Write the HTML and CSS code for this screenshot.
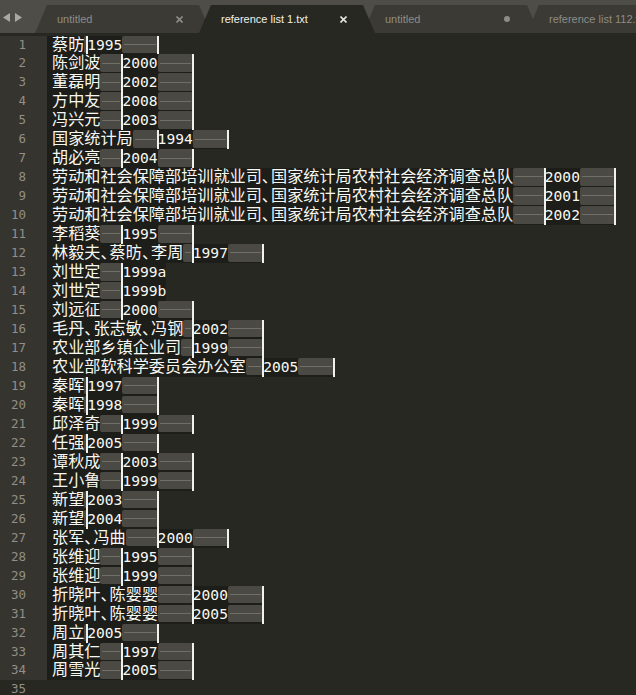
FILE: index.html
```html
<!DOCTYPE html>
<html lang="zh-CN">
<head>
    <meta charset="UTF-8">
    <title>reference list 1.txt</title>
    <link rel="stylesheet" href="styles.css">
</head>
<body>
<div id="tabbar">
    <svg class="arrows" width="35" height="33" viewBox="0 0 35 33">
        <polygon points="10,13 3,17.5 10,22" fill="#a9a8a2"/>
        <polygon points="15,13 22,17.5 15,22" fill="#a9a8a2"/>
    </svg>
    <div class="tabs">
        <div class="tab">
            <span class="name">untitled</span>
            <svg class="close" width="7" height="7" viewBox="0 0 7 7"><path d="M0.5 0.5L6.5 6.5M6.5 0.5L0.5 6.5"/></svg>
        </div>
        <div class="tab active">
            <span class="name">reference list 1.txt</span>
            <svg class="close" width="7" height="7" viewBox="0 0 7 7"><path d="M0.5 0.5L6.5 6.5M6.5 0.5L0.5 6.5"/></svg>
        </div>
        <div class="tab">
            <span class="name">untitled</span>
            <span class="dot"></span>
        </div>
        <div class="tab">
            <span class="name">reference list 112.txt</span>
        </div>
    </div>
</div>
<div id="editor">
    <div class="line"><span class="num">1</span><span class="code"><span class="cell w1"><span class="zh">蔡昉</span><i class="ws"></i></span><span class="cell w2"><span class="en">1995</span><i class="ws"></i></span></span></div>
    <div class="line"><span class="num">2</span><span class="code"><span class="cell w2"><span class="zh">陈剑波</span><i class="ws"></i></span><span class="cell w2"><span class="en">2000</span><i class="ws"></i></span></span></div>
    <div class="line"><span class="num">3</span><span class="code"><span class="cell w2"><span class="zh">董磊明</span><i class="ws"></i></span><span class="cell w2"><span class="en">2002</span><i class="ws"></i></span></span></div>
    <div class="line"><span class="num">4</span><span class="code"><span class="cell w2"><span class="zh">方中友</span><i class="ws"></i></span><span class="cell w2"><span class="en">2008</span><i class="ws"></i></span></span></div>
    <div class="line"><span class="num">5</span><span class="code"><span class="cell w2"><span class="zh">冯兴元</span><i class="ws"></i></span><span class="cell w2"><span class="en">2003</span><i class="ws"></i></span></span></div>
    <div class="line"><span class="num">6</span><span class="code"><span class="cell w3"><span class="zh">国家统计局</span><i class="ws"></i></span><span class="cell w2"><span class="en">1994</span><i class="ws"></i></span></span></div>
    <div class="line"><span class="num">7</span><span class="code"><span class="cell w2"><span class="zh">胡必亮</span><i class="ws"></i></span><span class="cell w2"><span class="en">2004</span><i class="ws"></i></span></span></div>
    <div class="line"><span class="num">8</span><span class="code"><span class="cell w14"><span class="zh">劳动和社会保障部培训就业司<span class="dun">、</span>国家统计局农村社会经济调查总队</span><i class="ws"></i></span><span class="cell w2"><span class="en">2000</span><i class="ws"></i></span></span></div>
    <div class="line"><span class="num">9</span><span class="code"><span class="cell w14"><span class="zh">劳动和社会保障部培训就业司<span class="dun">、</span>国家统计局农村社会经济调查总队</span><i class="ws"></i></span><span class="cell w2"><span class="en">2001</span><i class="ws"></i></span></span></div>
    <div class="line"><span class="num">10</span><span class="code"><span class="cell w14"><span class="zh">劳动和社会保障部培训就业司<span class="dun">、</span>国家统计局农村社会经济调查总队</span><i class="ws"></i></span><span class="cell w2"><span class="en">2002</span><i class="ws"></i></span></span></div>
    <div class="line"><span class="num">11</span><span class="code"><span class="cell w2"><span class="zh">李稻葵</span><i class="ws"></i></span><span class="cell w2"><span class="en">1995</span><i class="ws"></i></span></span></div>
    <div class="line"><span class="num">12</span><span class="code"><span class="cell w4"><span class="zh">林毅夫<span class="dun">、</span>蔡昉<span class="dun">、</span>李周</span><i class="ws"></i></span><span class="cell w2"><span class="en">1997</span><i class="ws"></i></span></span></div>
    <div class="line"><span class="num">13</span><span class="code"><span class="cell w2"><span class="zh">刘世定</span><i class="ws"></i></span><span class="en">1999a</span></span></div>
    <div class="line"><span class="num">14</span><span class="code"><span class="cell w2"><span class="zh">刘世定</span><i class="ws"></i></span><span class="en">1999b</span></span></div>
    <div class="line"><span class="num">15</span><span class="code"><span class="cell w2"><span class="zh">刘远征</span><i class="ws"></i></span><span class="cell w2"><span class="en">2000</span><i class="ws"></i></span></span></div>
    <div class="line"><span class="num">16</span><span class="code"><span class="cell w4"><span class="zh">毛丹<span class="dun">、</span>张志敏<span class="dun">、</span>冯钢</span><i class="ws"></i></span><span class="cell w2"><span class="en">2002</span><i class="ws"></i></span></span></div>
    <div class="line"><span class="num">17</span><span class="code"><span class="cell w4"><span class="zh">农业部乡镇企业司</span><i class="ws"></i></span><span class="cell w2"><span class="en">1999</span><i class="ws"></i></span></span></div>
    <div class="line"><span class="num">18</span><span class="code"><span class="cell w6"><span class="zh">农业部软科学委员会办公室</span><i class="ws"></i></span><span class="cell w2"><span class="en">2005</span><i class="ws"></i></span></span></div>
    <div class="line"><span class="num">19</span><span class="code"><span class="cell w1"><span class="zh">秦晖</span><i class="ws"></i></span><span class="cell w2"><span class="en">1997</span><i class="ws"></i></span></span></div>
    <div class="line"><span class="num">20</span><span class="code"><span class="cell w1"><span class="zh">秦晖</span><i class="ws"></i></span><span class="cell w2"><span class="en">1998</span><i class="ws"></i></span></span></div>
    <div class="line"><span class="num">21</span><span class="code"><span class="cell w2"><span class="zh">邱泽奇</span><i class="ws"></i></span><span class="cell w2"><span class="en">1999</span><i class="ws"></i></span></span></div>
    <div class="line"><span class="num">22</span><span class="code"><span class="cell w1"><span class="zh">任强</span><i class="ws"></i></span><span class="cell w2"><span class="en">2005</span><i class="ws"></i></span></span></div>
    <div class="line"><span class="num">23</span><span class="code"><span class="cell w2"><span class="zh">谭秋成</span><i class="ws"></i></span><span class="cell w2"><span class="en">2003</span><i class="ws"></i></span></span></div>
    <div class="line"><span class="num">24</span><span class="code"><span class="cell w2"><span class="zh">王小鲁</span><i class="ws"></i></span><span class="cell w2"><span class="en">1999</span><i class="ws"></i></span></span></div>
    <div class="line"><span class="num">25</span><span class="code"><span class="cell w1"><span class="zh">新望</span><i class="ws"></i></span><span class="cell w2"><span class="en">2003</span><i class="ws"></i></span></span></div>
    <div class="line"><span class="num">26</span><span class="code"><span class="cell w1"><span class="zh">新望</span><i class="ws"></i></span><span class="cell w2"><span class="en">2004</span><i class="ws"></i></span></span></div>
    <div class="line"><span class="num">27</span><span class="code"><span class="cell w3"><span class="zh">张军<span class="dun">、</span>冯曲</span><i class="ws"></i></span><span class="cell w2"><span class="en">2000</span><i class="ws"></i></span></span></div>
    <div class="line"><span class="num">28</span><span class="code"><span class="cell w2"><span class="zh">张维迎</span><i class="ws"></i></span><span class="cell w2"><span class="en">1995</span><i class="ws"></i></span></span></div>
    <div class="line"><span class="num">29</span><span class="code"><span class="cell w2"><span class="zh">张维迎</span><i class="ws"></i></span><span class="cell w2"><span class="en">1999</span><i class="ws"></i></span></span></div>
    <div class="line"><span class="num">30</span><span class="code"><span class="cell w4"><span class="zh">折晓叶<span class="dun">、</span>陈婴婴</span><i class="ws"></i></span><span class="cell w2"><span class="en">2000</span><i class="ws"></i></span></span></div>
    <div class="line"><span class="num">31</span><span class="code"><span class="cell w4"><span class="zh">折晓叶<span class="dun">、</span>陈婴婴</span><i class="ws"></i></span><span class="cell w2"><span class="en">2005</span><i class="ws"></i></span></span></div>
    <div class="line"><span class="num">32</span><span class="code"><span class="cell w1"><span class="zh">周立</span><i class="ws"></i></span><span class="cell w2"><span class="en">2005</span><i class="ws"></i></span></span></div>
    <div class="line"><span class="num">33</span><span class="code"><span class="cell w2"><span class="zh">周其仁</span><i class="ws"></i></span><span class="cell w2"><span class="en">1997</span><i class="ws"></i></span></span></div>
    <div class="line"><span class="num">34</span><span class="code"><span class="cell w2"><span class="zh">周雪光</span><i class="ws"></i></span><span class="cell w2"><span class="en">2005</span><i class="ws"></i></span></span></div>
    <div class="line last"><span class="num">35</span></div>
</div>
</body>
</html>
```

FILE: styles.css
```css
*{
    box-sizing: border-box;
}
html,body{
    margin: 0;
    padding: 0;
}
body{
    width: 636px;
    height: 695px;
    overflow: hidden;
    background: #282823;
}

/* tab strip */
#tabbar{
    height: 33px;
    display: flex;
    align-items: flex-end;
    overflow: hidden;
    background: #4e4d48;
}
.arrows{
    flex: none;
    align-self: flex-start;
}
.tabs{
    display: flex;
    height: 28px;
}
.tab{
    flex: none;
    width: 176px;
    height: 28px;
    margin-left: -12px;
    padding-left: 22px;
    display: flex;
    align-items: center;
    clip-path: polygon(12px 0, 164px 0, 176px 100%, 0 100%);
    background: #3b3a35;
    color: #8d8c86;
    font: 11px "Liberation Sans", Arial, sans-serif;
    white-space: nowrap;
    position: relative;
}
.tab:first-child{
    margin-left: 0;
}
.tab.active{
    background: #282823;
    color: #f0f0ea;
    z-index: 1;
}
.tab .close{
    margin-left: auto;
    margin-right: 28px;
    stroke: #8d8c86;
    stroke-width: 1.6;
}
.tab.active .close{
    stroke: #e4e4de;
}
.tab .dot{
    margin-left: auto;
    margin-right: 29px;
    width: 6px;
    height: 6px;
    border-radius: 50%;
    background: #8d8c86;
}

/* text area */
#editor{
    padding-top: 2.5px;
}
.line{
    display: flex;
    height: 18.97px;
}
.num{
    flex: none;
    width: 47px;
    padding-right: 21px;
    text-align: right;
    background: #35342e;
    color: #918f88;
    font: 12.5px/17.95px "DejaVu Sans Mono", monospace;
}
.line.last .num{
    background: transparent;
}
.code{
    display: flex;
    padding-left: 5px;
    background: #1d1d19;
    color: #f8f8f2;
}
.cell{
    flex: none;
    display: flex;
    align-items: flex-start;
    position: relative;
}
.cell::after{
    content: "";
    position: absolute;
    top: 0;
    bottom: 0;
    right: -1px;
    width: 2px;
    background: #f2f2ec;
    z-index: 1;
}
.w1{ width: 35.2px; }
.w2{ width: 70.4px; }
.w3{ width: 105.6px; }
.w4{ width: 140.8px; }
.w6{ width: 211.2px; }
.w14{ width: 492.8px; }

.zh{
    flex: none;
    white-space: nowrap;
    font: 16.15px/14px "Noto Sans CJK SC", sans-serif;
}
.dun{
    letter-spacing: -7px;
}
.en{
    flex: none;
    white-space: nowrap;
    font: 14.6px/17.9px "DejaVu Sans Mono", monospace;
}
.ws{
    flex: 1;
    min-width: 0;
    height: 17.4px;
    border-radius: 2px;
    background: linear-gradient(#6f6e67, #6f6e67) center / calc(100% - 4px) 1px no-repeat, #4a4943;
}
```
